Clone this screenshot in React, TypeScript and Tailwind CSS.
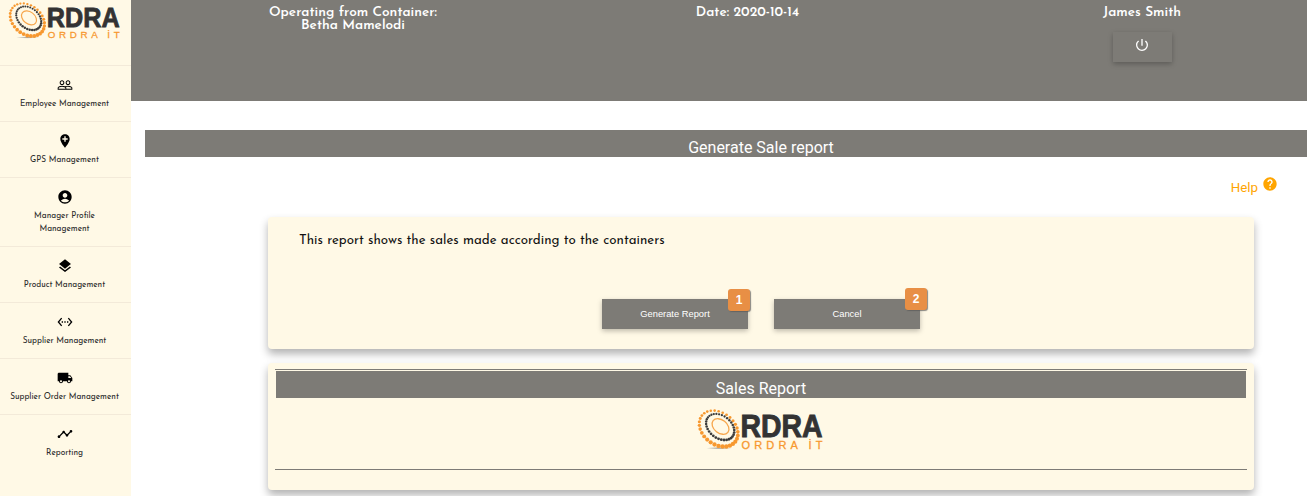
import React from "react";
import {
  MdPeopleOutline,
  MdAddLocation,
  MdAccountCircle,
  MdLayers,
  MdSettingsEthernet,
  MdLocalShipping,
  MdTimeline,
  MdPowerSettingsNew,
  MdHelp,
} from "react-icons/md";

type Dot = { x: number; y: number; r: number };

function ring(cx: number, cy: number, rx: number, ry: number, n: number, small: number, big: number): Dot[] {
  const tilt = (38 * Math.PI) / 180;
  return Array.from({ length: n }, (_, i) => {
    const a = (i / n) * Math.PI * 2;
    const u = rx * Math.cos(a);
    const v = ry * Math.sin(a);
    const x = u * Math.cos(tilt) - v * Math.sin(tilt);
    const y = u * Math.sin(tilt) + v * Math.cos(tilt);
    const t = (y / rx + 1) / 2;
    return { x: cx + x, y: cy + y, r: small + (big - small) * t };
  });
}

const outer = ring(20.6, 19.6, 21.2, 15.8, 30, 1.2, 2.3);
const middle = ring(22.2, 18, 15.6, 11.2, 32, 1.1, 1.45);

function Logo({ className }: { className: string }) {
  return (
    <svg className={`overflow-visible ${className}`} viewBox="0 0 126 42" preserveAspectRatio="none">
      <defs>
        <radialGradient id="shade">
          <stop offset="0" stopColor="#777" stopOpacity="0.7" />
          <stop offset="1" stopColor="#777" stopOpacity="0" />
        </radialGradient>
      </defs>
      <ellipse cx="21" cy="39.2" rx="13" ry="1.3" fill="url(#shade)" />
      {outer.map((d, i) => (
        <circle key={i} cx={d.x} cy={d.y} r={d.r} fill="#f7982f" />
      ))}
      {middle.map((d, i) => (
        <circle key={i} cx={d.x} cy={d.y} r={d.r} fill="#3b3b3b" />
      ))}
      <ellipse cx="22.5" cy="17.5" rx="9.4" ry="6.6" transform="rotate(38 22.5 17.5)" fill="none" stroke="#f7a64c" strokeWidth="1.3" />
      <text x="42.5" y="27.8" fontFamily="Liberation Sans, Arial, sans-serif" fontWeight="700" fontSize="31" fill="#333333" stroke="#333333" strokeWidth="0.9" textLength="82" lengthAdjust="spacingAndGlyphs">RDRA</text>
      <text x="43.5" y="39.6" fontFamily="Liberation Sans, Arial, sans-serif" fontSize="11" fill="#f7982f" stroke="#f7982f" strokeWidth="0.3" textLength="81" lengthAdjust="spacing">ORDRA İT</text>
    </svg>
  );
}

const items = [
  { icon: MdPeopleOutline, lines: ["Employee Management"] },
  { icon: MdAddLocation, lines: ["GPS Management"] },
  { icon: MdAccountCircle, lines: ["Manager Profile", "Management"] },
  { icon: MdLayers, lines: ["Product Management"] },
  { icon: MdSettingsEthernet, lines: ["Supplier Management"] },
  { icon: MdLocalShipping, lines: ["Supplier Order Management"] },
  { icon: MdTimeline, lines: ["Reporting"] },
];

function Sidebar() {
  return (
    <aside className="w-[131px] shrink-0 bg-[#fff9e6]">
      <div className="h-[65px] pl-[9px] pt-[2px]">
        <Logo className="h-[38px] w-[112px]" />
      </div>
      <nav>
        {items.map(({ icon: Icon, lines }) => (
          <a
            key={lines[0]}
            className="flex flex-col items-center border-t border-[#f3ead9] pb-[10px] pr-[2px] pt-[11px] text-[8.32px] leading-[13px] text-[#2b2b2b]"
          >
            <Icon className="mb-[5px] size-4 text-black" />
            {lines.map((l) => (
              <span key={l} className="whitespace-nowrap">{l}</span>
            ))}
          </a>
        ))}
      </nav>
    </aside>
  );
}

function ActionButton({ label, badge, badgeClass }: { label: string; badge: string; badgeClass: string }) {
  return (
    <button className="relative h-[30px] w-[146px] bg-[#7d7b76] pt-px font-['Liberation_Sans',Arial,sans-serif] text-[9.33px] text-white shadow-[0_2px_5px_rgba(0,0,0,0.26)]">
      {label}
      <span className={`absolute flex h-[22px] w-[22px] items-center justify-center rounded-[3px] bg-[#e88f45] text-[12px] font-bold shadow-[1px_1px_1px_rgba(90,90,90,0.7)] ${badgeClass}`}>
        {badge}
      </span>
    </button>
  );
}

export default function App() {
  return (
    <div className="flex h-[496px] w-[1307px] overflow-hidden bg-white font-['Josefin_Sans',Lato,sans-serif]">
      <Sidebar />
      <div className="min-w-0 grow">
        <header className="flex h-[101px] bg-[#7d7b76] pt-[6px] text-center text-[13.65px] font-semibold leading-[13px] text-white">
          <div className="ml-[26px] w-[392px] shrink-0">
            <p>Operating from Container:</p>
            <p>Betha Mamelodi</p>
          </div>
          <div className="w-[397px] shrink-0">
            <p>Date: 2020-10-14</p>
          </div>
          <div className="flex w-[392px] shrink-0 flex-col items-center">
            <p>James Smith</p>
            <button className="mt-[13px] flex h-[30px] w-[59px] items-center justify-center bg-[#7d7b76] shadow-[0_2px_5px_rgba(0,0,0,0.26)]">
              <MdPowerSettingsNew className="-mt-[4px] size-4" />
            </button>
          </div>
        </header>
        <h1 className="ml-[14px] mt-[29px] h-[27px] bg-[#7d7b76] pl-[70px] text-center font-[Roboto,sans-serif] text-[16px] leading-[35px] text-white">
          Generate Sale report
        </h1>
        <div className="flex h-[60px] items-start justify-end pr-[29px] pt-[19px] font-[Roboto,sans-serif] text-[13.33px] text-[#ffa500]">
          <span className="mt-[2px] leading-5">Help</span>
          <MdHelp className="ml-1 size-4" />
        </div>
        <main className="ml-[137px] w-[986px]">
          <section className="h-[132px] rounded-[4px] bg-[#fff9e6] shadow-[0_5px_8px_rgba(0,0,0,0.3)]">
            <p className="h-[82px] pl-[31px] pt-[15px] text-[13.33px] leading-[18px] text-[#111]">
              This report shows the sales made according to the containers
            </p>
            <div className="flex justify-center gap-[26px]">
              <ActionButton label="Generate Report" badge="1" badgeClass="-top-[10px] left-[126px]" />
              <ActionButton label="Cancel" badge="2" badgeClass="-top-[11px] left-[131px]" />
            </div>
          </section>
          <section className="mt-[14px] h-[127px] rounded-[4px] bg-[#fff9e6] px-[7px] pt-[6px] shadow-[0_5px_8px_rgba(0,0,0,0.3)]">
            <div className="h-[101px] border-y border-[#7d7b76] px-px pt-px">
              <h2 className="h-[27px] bg-[#7d7b76] text-center font-[Roboto,sans-serif] text-[16px] leading-[35px] text-white">Sales Report</h2>
              <Logo className="mx-auto mt-[11px] h-[42px] w-[126px]" />
            </div>
          </section>
        </main>
      </div>
    </div>
  );
}
